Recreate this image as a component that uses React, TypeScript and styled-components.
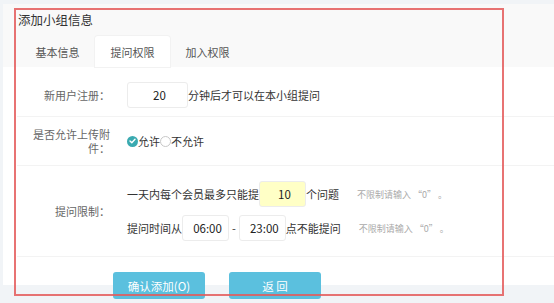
import React from "react";
import styled, { createGlobalStyle } from "styled-components";

const Global = createGlobalStyle`
  html, body { margin: 0; padding: 0; }
  body {
    background: #f1f4f7;
    font-family: "Noto Sans CJK SC", "Noto Sans", sans-serif;
    font-size: 11px;
    color: #333;
  }
`;

const Page = styled.div`
  position: relative;
  width: 554px;
  height: 303px;
  overflow: hidden;
`;

const Panel = styled.div`
  margin: 4px 0 0 3px;
  width: 551px;
  height: 281px;
  background: #fff;
  display: flex;
  flex-direction: column;
`;

const Header = styled.div`
  background: #f9f9f9;
  display: flex;
  flex-direction: column;
`;

const Title = styled.div`
  height: 32px;
  line-height: 32px;
  padding-left: 15px;
  font-size: 12.5px;
  color: #333;
`;

const Tabs = styled.div`
  display: flex;
  padding-left: 17px;
  height: 31px;
`;

const Tab = styled.div<{ $active?: boolean }>`
  width: 75px;
  display: flex;
  align-items: center;
  justify-content: center;
  font-size: 11px;
  color: #555;
  background: ${(p) => (p.$active ? "#fff" : "transparent")};
  border-radius: 3px 3px 0 0;
  box-shadow: ${(p) => (p.$active ? "0 0 0 1px #f2f2f2" : "none")};
`;

const Form = styled.div`
  padding-top: 7px;
  display: flex;
  flex-direction: column;
`;

const Row = styled.div<{ $pad: number }>`
  display: flex;
  align-items: center;
  padding: ${(p) => p.$pad}px 0;
  margin-left: 14px;
  border-bottom: 1px solid #f3f3f3;
`;

const Label = styled.div`
  width: 96px;
  flex: none;
  text-align: right;
  color: #666;
  line-height: 14px;
  padding-right: 3px;
  box-sizing: border-box;
  margin-right: 14px;
`;

const LabelWide = styled(Label)`
  padding-left: 13px;
`;

const Content = styled.div`
  display: flex;
  flex-direction: column;
  gap: 8px;
`;

const Line = styled.div`
  display: flex;
  align-items: center;
  color: #333;
  white-space: nowrap;
`;

const Input = styled.div<{ $w: number; $yellow?: boolean }>`
  width: ${(p) => p.$w}px;
  height: 26px;
  box-sizing: border-box;
  border: 1px solid #ececec;
  border-radius: 3px;
  background: ${(p) => (p.$yellow ? "#ffffc6" : "#fff")};
  display: flex;
  align-items: center;
  justify-content: center;
  font-size: 11.5px;
  color: #222;
  padding-left: 4px;
`;

const Dash = styled.span`
  margin: 0 3px;
`;

const Hint = styled.span`
  margin-left: 18px;
  font-size: 9px;
  color: #aaa;
`;

const Radio = styled.span<{ $checked?: boolean }>`
  width: 11px;
  height: 11px;
  box-sizing: border-box;
  border-radius: 50%;
  display: inline-flex;
  align-items: center;
  justify-content: center;
  background: ${(p) => (p.$checked ? "#3aaab0" : "#fff")};
  border: ${(p) => (p.$checked ? "none" : "1px solid #c8c8c8")};
`;

const ButtonRow = styled.div`
  display: flex;
  gap: 24px;
  padding: 15px 0 0 110px;
`;

const Button = styled.div`
  width: 92px;
  height: 27px;
  border-radius: 3px;
  background: #5bc0de;
  color: #fff;
  font-size: 11.5px;
  display: flex;
  align-items: center;
  justify-content: center;
`;

const Annotation = styled.div`
  position: absolute;
  left: 14px;
  top: 8px;
  width: 490px;
  height: 288px;
  box-sizing: border-box;
  border: 2px solid rgba(228, 90, 90, 0.85);
  pointer-events: none;
`;

export default function App() {
  return (
    <>
      <Global />
      <Page>
        <Panel>
          <Header>
            <Title>添加小组信息</Title>
            <Tabs>
              <Tab>基本信息</Tab>
              <Tab $active>提问权限</Tab>
              <Tab>加入权限</Tab>
            </Tabs>
          </Header>
          <Form>
            <Row $pad={8}>
              <Label>新用户注册：</Label>
              <Line>
                <Input $w={61}>20</Input>
                <span>分钟后才可以在本小组提问</span>
              </Line>
            </Row>
            <Row $pad={10}>
              <LabelWide>是否允许上传附件：</LabelWide>
              <Line>
                <Radio $checked>
                  <svg width="7" height="6" viewBox="0 0 7 6">
                    <path d="M1 3 L2.8 4.7 L6 1.2" fill="none" stroke="#fff" strokeWidth="1.4" strokeLinecap="round" strokeLinejoin="round" />
                  </svg>
                </Radio>
                <span>允许</span>
                <Radio />
                <span>不允许</span>
              </Line>
            </Row>
            <Row $pad={15}>
              <Label>提问限制：</Label>
              <Content>
                <Line>
                  <span>一天内每个会员最多只能提</span>
                  <Input $w={47} $yellow>10</Input>
                  <span>个问题</span>
                  <Hint>不限制请输入 “0” 。</Hint>
                </Line>
                <Line>
                  <span>提问时间从</span>
                  <Input $w={47}>06:00</Input>
                  <Dash>-</Dash>
                  <Input $w={47}>23:00</Input>
                  <span>点不能提问</span>
                  <Hint>不限制请输入 “0” 。</Hint>
                </Line>
              </Content>
            </Row>
            <ButtonRow>
              <Button>确认添加(O)</Button>
              <Button>返 回</Button>
            </ButtonRow>
          </Form>
        </Panel>
        <Annotation />
      </Page>
    </>
  );
}
